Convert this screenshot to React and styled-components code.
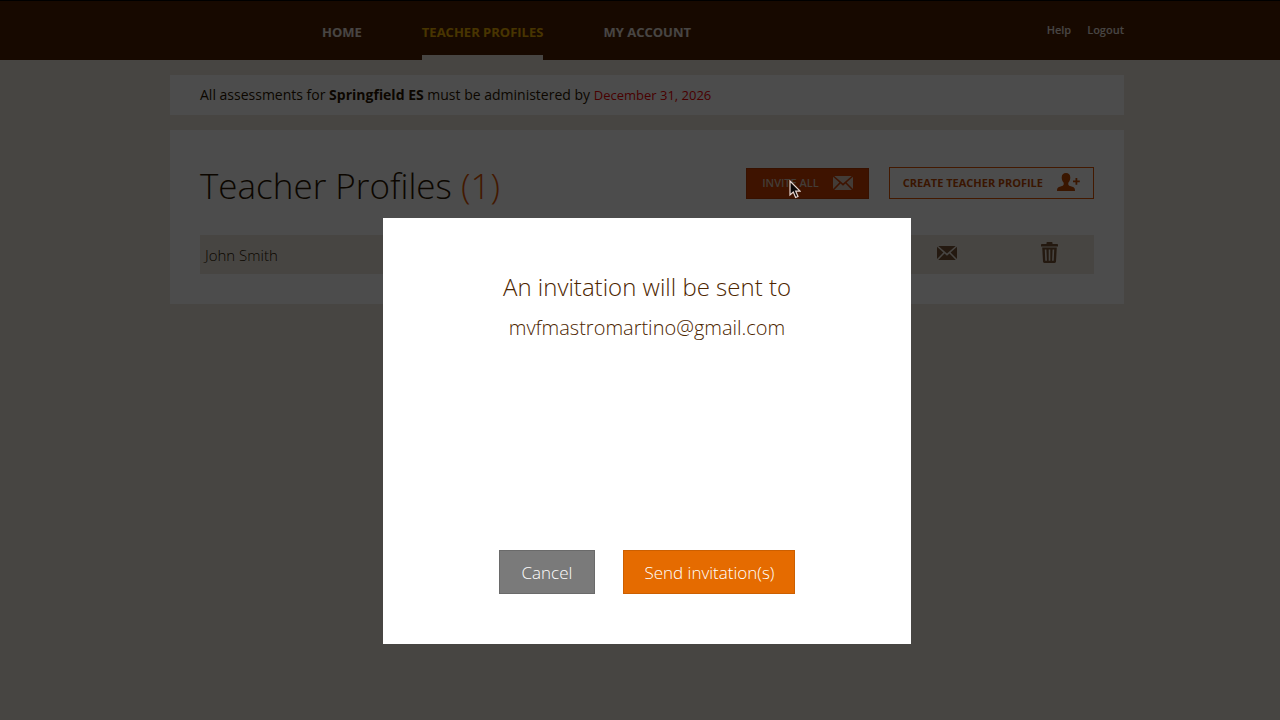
import React, { useState } from "react";
import styled, { createGlobalStyle, css } from "styled-components";

const GlobalStyle = createGlobalStyle`
  * {
    box-sizing: border-box;
  }

  body {
    margin: 0;
    background-color: #ede6de;
    color: #2b1600;
    font-family: "Open Sans", "Noto Sans", sans-serif;
    font-size: 14px;
  }

  button {
    font-family: inherit;
    cursor: pointer;
  }

  a {
    text-decoration: none;
  }
`;

const Page = styled.div`
  min-height: 100vh;
  padding-left: 14px;
`;

const Container = styled.div`
  max-width: 954px;
  margin: 0 auto;
`;

const Header = styled.header`
  margin-left: -14px;
  padding-left: 14px;
  background-color: #4d2000;
  border-top: 1px solid #000;
`;

const HeaderInner = styled(Container)`
  display: flex;
  justify-content: space-between;
  height: 59px;
`;

const Nav = styled.nav`
  display: flex;
  gap: 60px;
  padding-left: 152px;
`;

const NavLink = styled.a`
  padding-top: 21px;
  font-size: 13px;
  font-weight: 700;
  line-height: 20px;
  color: ${(props) => (props.$active ? "#f2b200" : "#f0e6e0")};
  border-bottom: 5px solid
    ${(props) => (props.$active ? "#ede6de" : "transparent")};
`;

const AccountLinks = styled.div`
  display: flex;
  gap: 16px;
  padding-top: 20px;

  a {
    font-size: 11px;
    font-weight: 600;
    line-height: 18px;
    color: #f0e6e0;
  }
`;

const Notice = styled.p`
  margin: 15px 0;
  padding: 10px 30px;
  background-color: #fff;
  font-size: 14px;
  line-height: 20px;

  strong {
    font-weight: 700;
  }
`;

const DueDate = styled.span`
  font-size: 13px;
  color: #f00000;
`;

const Panel = styled.section`
  padding: 30px;
  background-color: #fff;
`;

const PanelHeader = styled.div`
  display: flex;
  justify-content: space-between;
  align-items: flex-start;
  height: 75px;
`;

const Title = styled.h1`
  margin: 0;
  font-size: 35px;
  font-weight: 300;
  line-height: 52px;
`;

const Count = styled.span`
  color: #e05500;
`;

const Actions = styled.div`
  display: flex;
  align-items: flex-end;
  gap: 20px;
  padding-top: 7px;
`;

const ActionButton = styled.button`
  display: flex;
  align-items: center;
  gap: 14px;
  height: 32px;
  padding: 0 13px 2px;
  border: 1px solid #e05500;
  background-color: #fff;
  color: #c44a00;
  font-size: 11px;
  font-weight: 700;

  ${(props) =>
    props.$filled &&
    css`
      height: 31px;
      padding: 0 15px 2px;
      background-color: #d04000;
      border-color: #b83a00;
      color: #e0c8b8;
      font-weight: 600;
    `}
`;

const Teachers = styled.table`
  width: 100%;
  border-collapse: collapse;
  background-color: #ede6de;

  td {
    height: 39px;
    padding: 0 5px;
  }
`;

const NameCell = styled.td`
  font-size: 15px;
  font-weight: 300;
`;

const IconCell = styled.td`
  width: ${(props) => props.$width}px;
  text-align: center;
`;

const IconButton = styled.button`
  padding: 0;
  border: none;
  background: none;
  color: #7a5636;

  svg {
    display: block;
  }
`;

const Overlay = styled.div`
  position: fixed;
  inset: 0;
  display: flex;
  justify-content: center;
  align-items: flex-start;
  padding: 218px 0 0 14px;
  background-color: rgba(0, 0, 0, 0.7);
`;

const Modal = styled.div`
  display: flex;
  flex-direction: column;
  align-items: center;
  justify-content: space-between;
  width: 528px;
  min-height: 426px;
  padding: 52px 30px 50px;
  background-color: #fff;
  color: #4d2600;
  text-align: center;
`;

const ModalTitle = styled.h2`
  margin: 0 0 8px;
  font-size: 24px;
  font-weight: 300;
  line-height: 34px;
`;

const Recipient = styled.p`
  margin: 0;
  font-size: 20px;
  font-weight: 300;
  line-height: 32px;
`;

const ModalButtons = styled.div`
  display: flex;
  gap: 28px;
`;

const ModalButton = styled.button`
  height: 44px;
  padding: 0 ${(props) => (props.$primary ? 20 : 22)}px;
  border: 1px solid ${(props) => (props.$primary ? "#cc5f00" : "#6a6a6a")};
  background-color: ${(props) => (props.$primary ? "#e56b00" : "#7a7a7a")};
  color: #fff;
  font-size: 17px;
  font-weight: 300;
`;

const Pointer = styled.svg`
  position: fixed;
  left: 789px;
  top: 180px;
  pointer-events: none;
`;

const MailIcon = () => (
  <svg width="20" height="14" viewBox="0 0 20 14" fill="currentColor">
    <path d="M1.3 0h17.4L10 7.6z" />
    <path d="M0 .8 6.4 6.5 0 13z" />
    <path d="M20 .8 13.6 6.5 20 13z" />
    <path d="M1.2 14 7.5 7.5 10 9.7l2.5-2.2 6.3 6.5z" />
  </svg>
);

const UserPlusIcon = () => (
  <svg width="23" height="18" viewBox="0 0 23 18" fill="currentColor">
    <path d="M9 0c2.7 0 4.3 1.7 4.3 4.4 0 2.3-.8 4.2-2 5.3v1.6c0 .8.6 1.3 1.7 1.7l3 1.1c1.4.5 2 1.4 2 3.9H0c0-2.5.6-3.4 2-3.9l3-1.1c1.1-.4 1.7-.9 1.7-1.7V9.7c-1.2-1.1-2-3-2-5.3C4.7 1.7 6.3 0 9 0z" />
    <path d="M18.5 5h1.8v2.5h2.5v1.8h-2.5v2.5h-1.8V9.3H16V7.5h2.5z" />
  </svg>
);

const TrashIcon = () => (
  <svg width="17" height="21" viewBox="0 0 17 21" fill="currentColor">
    <path d="M5.5 2V.8c0-.4.3-.8.8-.8h4.4c.5 0 .8.4.8.8V2H16c.6 0 1 .4 1 1v1.6H0V3c0-.6.4-1 1-1z" />
    <path
      fillRule="evenodd"
      d="M1.2 5.6h14.6L15 19.6c0 .8-.6 1.4-1.4 1.4H3.4c-.8 0-1.4-.6-1.4-1.4zM3.8 7.5l.5 11.3h1.6L5.4 7.5zm3.9 0v11.3h1.6V7.5zm3.9 0-.5 11.3h1.6l.5-11.3z"
    />
  </svg>
);

const teachers = [{ name: "John Smith", email: "mvfmastromartino@gmail.com" }];

const App = () => {
  const [inviting, setInviting] = useState(true);

  const closeModal = () => setInviting(false);

  return (
    <>
      <GlobalStyle />
      <Page>
        <Header>
          <HeaderInner>
            <Nav>
              <NavLink href="#home">HOME</NavLink>
              <NavLink href="#profiles" $active>
                TEACHER PROFILES
              </NavLink>
              <NavLink href="#account">MY ACCOUNT</NavLink>
            </Nav>
            <AccountLinks>
              <a href="#help">Help</a>
              <a href="#logout">Logout</a>
            </AccountLinks>
          </HeaderInner>
        </Header>
        <Container as="main">
          <Notice>
            All assessments for <strong>Springfield ES</strong> must be
            administered by <DueDate>December 31, 2026</DueDate>
          </Notice>
          <Panel>
            <PanelHeader>
              <Title>
                Teacher Profiles <Count>({teachers.length})</Count>
              </Title>
              <Actions>
                <ActionButton $filled onClick={() => setInviting(true)}>
                  INVITE ALL
                  <MailIcon />
                </ActionButton>
                <ActionButton>
                  CREATE TEACHER PROFILE
                  <UserPlusIcon />
                </ActionButton>
              </Actions>
            </PanelHeader>
            <Teachers>
              <tbody>
                {teachers.map((teacher) => (
                  <tr key={teacher.email}>
                    <NameCell>{teacher.name}</NameCell>
                    <IconCell $width={114}>
                      <IconButton
                        aria-label="Invite"
                        onClick={() => setInviting(true)}
                      >
                        <MailIcon />
                      </IconButton>
                    </IconCell>
                    <IconCell $width={90}>
                      <IconButton aria-label="Delete">
                        <TrashIcon />
                      </IconButton>
                    </IconCell>
                  </tr>
                ))}
              </tbody>
            </Teachers>
          </Panel>
        </Container>
      </Page>
      {inviting && (
        <Overlay>
          <Modal role="dialog" aria-modal="true" aria-labelledby="inviteTitle">
            <div>
              <ModalTitle id="inviteTitle">
                An invitation will be sent to
              </ModalTitle>
              {teachers.map((teacher) => (
                <Recipient key={teacher.email}>{teacher.email}</Recipient>
              ))}
            </div>
            <ModalButtons>
              <ModalButton onClick={closeModal}>Cancel</ModalButton>
              <ModalButton $primary onClick={closeModal}>
                Send invitation(s)
              </ModalButton>
            </ModalButtons>
          </Modal>
        </Overlay>
      )}
      <Pointer width="12" height="19" viewBox="0 0 12 19">
        <path
          d="M1 1v14l3.3-3 2.3 5.5 2.4-1-2.3-5.3H11z"
          fill="#0a0606"
          stroke="#e6d6d0"
          strokeWidth="1.2"
        />
      </Pointer>
    </>
  );
};

export default App;
